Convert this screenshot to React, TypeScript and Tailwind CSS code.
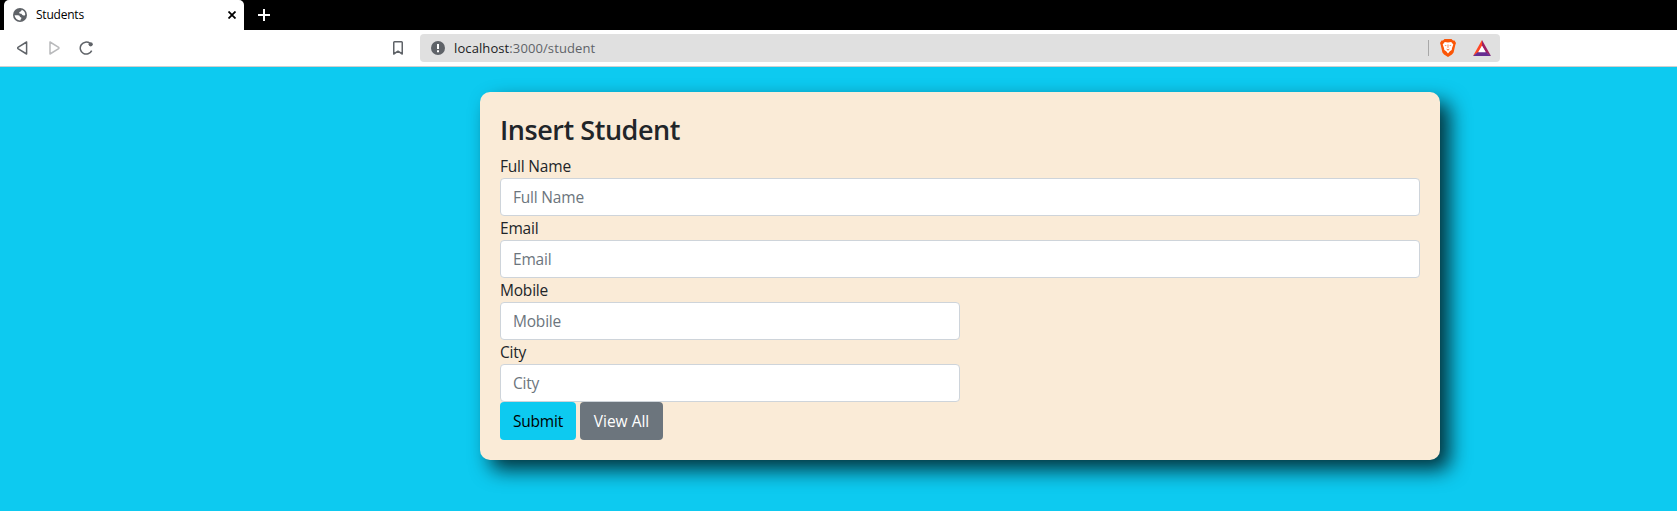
import React from "react";

const font = "font-['Open_Sans','Noto_Sans',sans-serif]";

function GlobeIcon() {
  return (
    <svg width="14" height="14" viewBox="0 0 14 14">
      <circle cx="7" cy="7" r="7" fill="#5f6368" />
      <path d="M1.6 7.2 H5 Q7 7.4 7 9 Q8.8 9.3 8.4 10.6 Q7.6 11 7.4 12.4 A5.5 5.5 0 0 1 1.6 7.2Z" fill="#fff" />
      <path d="M8.6 1.8 Q8.8 3 7.6 3.4 Q6 3.6 6.2 5 Q6.4 6 8.4 5.8 Q9.2 7.6 10.6 7.6 Q12 7.6 12.3 6.4 A5.5 5.5 0 0 0 8.6 1.8Z" fill="#fff" />
    </svg>
  );
}

function TabStrip() {
  return (
    <div className="flex h-[30px] bg-black pl-1">
      <div className="flex w-60 items-center rounded-t-[5px] bg-white pl-[9px] pr-2">
        <GlobeIcon />
        <span className="ml-[9px] flex-1 text-[12px] leading-[16px] tracking-[-0.22px] text-black">Students</span>
        <svg width="8" height="8" viewBox="0 0 8 8" stroke="#000" strokeWidth="1.8">
          <path d="M.5 .5 7.5 7.5M7.5 .5 .5 7.5" />
        </svg>
      </div>
      <svg className="ml-[14px] mt-[9px]" width="12" height="12" viewBox="0 0 12 12" stroke="#fff" strokeWidth="2">
        <path d="M6 0V12M0 6H12" />
      </svg>
    </div>
  );
}

function BraveIcon() {
  return (
    <svg width="16" height="18" viewBox="0 0 16 18">
      <path d="M4.5 0H11.5L13 1.6 14.5 1.5 16 4 15.3 6 13.6 13.5 12 15.5 8 18 4 15.5 2.4 13.5 .7 6 0 4 1.5 1.5 3 1.6Z" fill="#fb5607" />
      <path d="M4.8 3 8 3.5 11.2 3 13.3 5.6 12 9 11.7 11 9.8 12.3 8 14.6 6.2 12.3 4.3 11 4 9 2.7 5.6Z" fill="#fff" />
      <path d="M4.4 6 6.6 6.4 6 7.3ZM11.6 6 9.4 6.4 10 7.3ZM7.6 5.5H8.4L8.3 9H7.7ZM6 9.6 8 10.6 10 9.6 8 11.8Z" fill="#fb5607" />
    </svg>
  );
}

function BatIcon() {
  return (
    <svg width="18" height="16" viewBox="0 0 18 16">
      <path d="M9 0 9 6 5.3 12.5 0 16Z" fill="#ff4724" />
      <path d="M9 0 18 16 12.7 12.5 9 6Z" fill="#9e1f63" />
      <path d="M0 16 5.1 12H12.9L18 16Z" fill="#662d91" />
      <path d="M9 5.8 12.8 12.3H5.2Z" fill="#fff" />
    </svg>
  );
}

function Toolbar() {
  return (
    <div className="flex h-[37px] items-start border-b border-[#cfcfcf] bg-white pt-1">
      <div className="flex h-7 w-[420px] items-center pl-[17px]">
        <svg width="11" height="14" viewBox="0 0 11 14" fill="none" stroke="#5f6368" strokeWidth="1.5" strokeLinejoin="round">
          <path d="M9.6 1V13L.9 7.6Q.4 7 .9 6.4Z" />
        </svg>
        <svg className="ml-[21px]" width="11" height="14" viewBox="0 0 11 14" fill="none" stroke="#b9babc" strokeWidth="1.5" strokeLinejoin="round">
          <path d="M1 1V13L9.7 7.6Q10.2 7 9.7 6.4Z" />
        </svg>
        <svg className="ml-[19px]" width="15" height="15" viewBox="0 0 15 15">
          <path d="M11 2.4A6 6 0 1 0 12.7 9.6" fill="none" stroke="#5f6368" strokeWidth="1.5" />
          <circle cx="11.7" cy="3.3" r="2.1" fill="#5f6368" />
        </svg>
        <svg className="ml-[299px]" width="11" height="14" viewBox="0 0 11 14" fill="none" stroke="#5f6368" strokeWidth="1.5" strokeLinejoin="round">
          <path d="M.75 1.6Q.75 .8 1.5 .8H8.5Q9.25 .8 9.25 1.6V13L5 10.2 .75 13Z" />
        </svg>
      </div>
      <div className="flex h-7 w-[1080px] items-center rounded bg-[#e0e0e0] pl-[11px] pr-[9px]">
        <svg width="14" height="14" viewBox="0 0 14 14">
          <circle cx="7" cy="7" r="7" fill="#5f6368" />
          <path d="M6 3H8V8H6ZM6 9.2H8V11.2H6Z" fill="#fff" />
        </svg>
        <span className="ml-[9px] flex-1 text-[13px] leading-[18px] tracking-[0.1px] text-[#5f6368]">
          <span className="text-[#202124]">localhost</span>:3000/student
        </span>
        <span className="mr-[11px] h-4 w-px bg-[#a8a8a8]" />
        <BraveIcon />
        <span className="w-[17px]" />
        <BatIcon />
      </div>
    </div>
  );
}

function Field({ label, half }: { label: string; half?: boolean }) {
  return (
    <div className={half ? "w-[460px]" : "w-full"}>
      <label className="block h-6 text-[15.5px] leading-6 tracking-[-0.2px]">{label}</label>
      <input
        placeholder={label}
        className="block h-[38px] w-full rounded border border-[#ced4da] bg-white px-3 text-[15.5px] leading-6 tracking-[-0.2px] placeholder:text-[#6c757d]"
      />
    </div>
  );
}

export default function App() {
  return (
    <div className={`flex h-[511px] flex-col overflow-hidden bg-[#0dcaf0] ${font}`}>
      <TabStrip />
      <Toolbar />
      <main className="ml-[480px] mt-[25px] h-[368px] w-[960px] rounded-[10px] bg-[#faebd7] p-5 text-[#212529] shadow-[10px_10px_20px_rgba(0,0,0,0.75)]">
        <h3 className="mb-2 h-[34px] pt-px text-[27px] font-semibold leading-[34px] tracking-[-0.45px]">Insert Student</h3>
        <Field label="Full Name" />
        <Field label="Email" />
        <Field label="Mobile" half />
        <Field label="City" half />
        <div className="flex gap-1 text-[15.5px] leading-6 tracking-[-0.2px]">
          <button className="h-[38px] w-[76px] rounded bg-[#0dcaf0] text-black">Submit</button>
          <button className="h-[38px] w-[83px] rounded bg-[#6c757d] tracking-normal text-white">View All</button>
        </div>
      </main>
    </div>
  );
}
